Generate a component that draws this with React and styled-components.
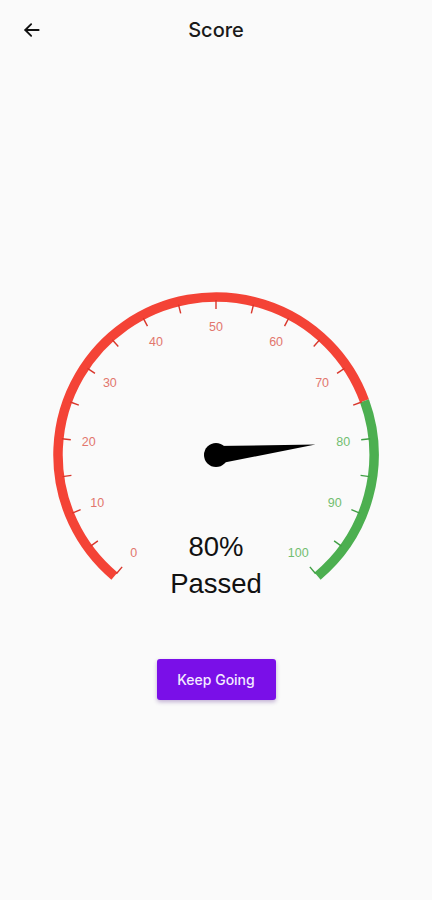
import React from 'react'
import styled, { createGlobalStyle } from 'styled-components'

const GlobalStyle = createGlobalStyle`
  html, body {
    margin: 0;
    padding: 0;
    background: #fafafa;
  }
  body {
    font-family: "Inter", "Roboto", "Liberation Sans", sans-serif;
  }
`

const Page = styled.div`
  width: 432px;
  min-height: 900px;
  display: flex;
  flex-direction: column;
  align-items: center;
  background: #fafafa;
`

const Header = styled.header`
  width: 100%;
  height: 60px;
  display: grid;
  grid-template-columns: 60px 1fr 60px;
  align-items: center;
`

const BackButton = styled.button`
  border: none;
  background: none;
  padding: 0 0 0 22px;
  height: 60px;
  display: flex;
  align-items: center;
  cursor: pointer;
  color: #111;
`

const Title = styled.h1`
  margin: 0;
  text-align: center;
  font-family: "Inter", "Roboto", "Liberation Sans", sans-serif;
  font-weight: 500;
  font-size: 20px;
  color: #1a1a1a;
`

const Gauge = styled.div`
  position: relative;
  width: 340px;
  height: 340px;
  margin-top: 225px;
`

const Readout = styled.div`
  position: absolute;
  left: 0;
  right: 0;
  top: 243px;
  display: flex;
  flex-direction: column;
  align-items: center;
  font-family: "Liberation Sans", "Roboto", sans-serif;
  font-size: 27.5px;
  color: #111;
  line-height: 37px;
`

const PrimaryButton = styled.button`
  margin-top: 34px;
  width: 119px;
  height: 41px;
  border: none;
  border-radius: 3px;
  background: #7a0fe8;
  color: #f3eaff;
  font-family: "Inter", "Roboto", "Liberation Sans", sans-serif;
  font-weight: 500;
  font-size: 14px;
  box-shadow: 0 2px 4px rgba(60, 0, 120, 0.3);
  cursor: pointer;
`

const CX = 170
const CY = 170
const R = 158
const RED = '#f44336'
const GREEN = '#4caf50'
const PASS = 75

const angleFor = (v) => -140 + 2.8 * v
const polar = (r, deg) => {
  const a = (deg * Math.PI) / 180
  return [CX + r * Math.sin(a), CY - r * Math.cos(a)]
}
const arcPath = (from, to) => {
  const [x1, y1] = polar(R, angleFor(from))
  const [x2, y2] = polar(R, angleFor(to))
  const large = angleFor(to) - angleFor(from) > 180 ? 1 : 0
  return `M ${x1} ${y1} A ${R} ${R} 0 ${large} 1 ${x2} ${y2}`
}

const Dial = ({ value }) => {
  const ticks = []
  for (let v = 0; v <= 100; v += 5) ticks.push(v)
  const labels = ticks.filter((v) => v % 10 === 0)
  const na = angleFor(value)
  const [tx, ty] = polar(100, na)
  const [bx1, by1] = polar(9, na - 90)
  const [bx2, by2] = polar(9, na + 90)

  return (
    <svg width="340" height="340" viewBox="0 0 340 340">
      <path d={arcPath(0, PASS)} fill="none" stroke={RED} strokeWidth="9.5" />
      <path d={arcPath(PASS, 100)} fill="none" stroke={GREEN} strokeWidth="9.5" />
      {ticks.map((v) => {
        const [x1, y1] = polar(146, angleFor(v))
        const [x2, y2] = polar(155, angleFor(v))
        return (
          <line
            key={v}
            x1={x1}
            y1={y1}
            x2={x2}
            y2={y2}
            stroke={v > PASS ? '#3f9f43' : '#d9362b'}
            strokeWidth="1.4"
          />
        )
      })}
      {labels.map((v) => {
        const [x, y] = polar(128, angleFor(v))
        return (
          <text
            key={v}
            x={x}
            y={y}
            textAnchor="middle"
            dominantBaseline="central"
            fontFamily="Liberation Sans, Arial, sans-serif"
            fontSize="12.5"
            fill={v > PASS ? '#72be70' : '#e2766d'}
          >
            {v}
          </text>
        )
      })}
      <polygon points={`${bx1},${by1} ${tx},${ty} ${bx2},${by2}`} fill="#000" />
      <circle cx={CX} cy={CY} r="12" fill="#000" />
    </svg>
  )
}

const ArrowLeft = () => (
  <svg width="20" height="20" viewBox="0 0 24 24" fill="none" stroke="currentColor" strokeWidth="2.2" strokeLinecap="round" strokeLinejoin="round">
    <path d="M20 12H4" />
    <path d="M11 5l-7 7 7 7" />
  </svg>
)

export default function App() {
  const score = 80
  return (
    <>
      <GlobalStyle />
      <Page>
        <Header>
          <BackButton aria-label="Back">
            <ArrowLeft />
          </BackButton>
          <Title>Score</Title>
          <span />
        </Header>
        <Gauge>
          <Dial value={score} />
          <Readout>
            <span>{score}%</span>
            <span>Passed</span>
          </Readout>
        </Gauge>
        <PrimaryButton>Keep Going</PrimaryButton>
      </Page>
    </>
  )
}
